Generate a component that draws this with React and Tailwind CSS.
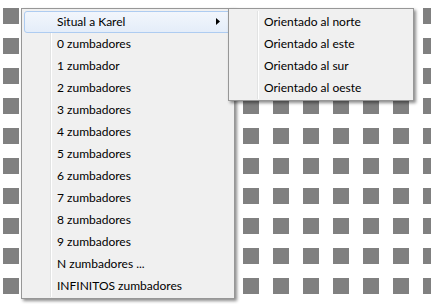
import React from "react";

const mainItems = [
  "0 zumbadores",
  "1 zumbador",
  "2 zumbadores",
  "3 zumbadores",
  "4 zumbadores",
  "5 zumbadores",
  "6 zumbadores",
  "7 zumbadores",
  "8 zumbadores",
  "9 zumbadores",
  "N zumbadores ...",
  "INFINITOS zumbadores",
];

const subItems = [
  "Orientado al norte",
  "Orientado al este",
  "Orientado al sur",
  "Orientado al oeste",
];

const MenuItem = ({ label, active, arrow }) => (
  <div
    className={
      "relative h-[22px] flex items-center pl-[32px] rounded-[3px] border " +
      (active
        ? "border-[#aeccf1] bg-[linear-gradient(#f2f6fc,#e4edf9)]"
        : "border-transparent")
    }
  >
    <span className="leading-none">{label}</span>
    {arrow && (
      <svg
        className="absolute right-[11px] top-[6px]"
        width="4"
        height="7"
        viewBox="0 0 4 7"
      >
        <path d="M0 0 L4 3.5 L0 7 Z" fill="#000" />
      </svg>
    )}
  </div>
);

const Menu = ({ className, children }) => (
  <div
    className={
      "absolute border border-[#979797] bg-[#f0f0f0] px-[2px] pt-[2px] pb-[1px] shadow-[2px_2px_3px_rgba(0,0,0,0.45)] " +
      className
    }
  >
    <div className="relative">
      <div className="absolute left-[26px] top-0 bottom-0 w-[2px] border-l border-[#e2e3e3] border-r border-r-white" />
      {children}
    </div>
  </div>
);

export default function App() {
  const squares = Array.from({ length: 150 });

  return (
    <div
      className="relative w-[431px] h-[304px] overflow-hidden bg-white text-[12px] text-black"
      style={{ fontFamily: "Lato, 'Noto Sans', sans-serif" }}
    >
      {/* board of squares */}
      <div className="grid grid-cols-[repeat(15,30px)] auto-rows-[30px] pl-[3px] pt-[8px]">
        {squares.map((_, i) => (
          <div key={i} className="w-[16px] h-[16px] bg-[#808080]" />
        ))}
      </div>

      {/* main context menu */}
      <Menu className="left-[21px] top-[8px] w-[214px]">
        <MenuItem label="Situal a Karel" active arrow />
        {mainItems.map((t) => (
          <MenuItem key={t} label={t} />
        ))}
      </Menu>

      {/* submenu */}
      <Menu className="left-[228px] top-[8px] w-[186px]">
        {subItems.map((t) => (
          <MenuItem key={t} label={t} />
        ))}
      </Menu>
    </div>
  );
}
